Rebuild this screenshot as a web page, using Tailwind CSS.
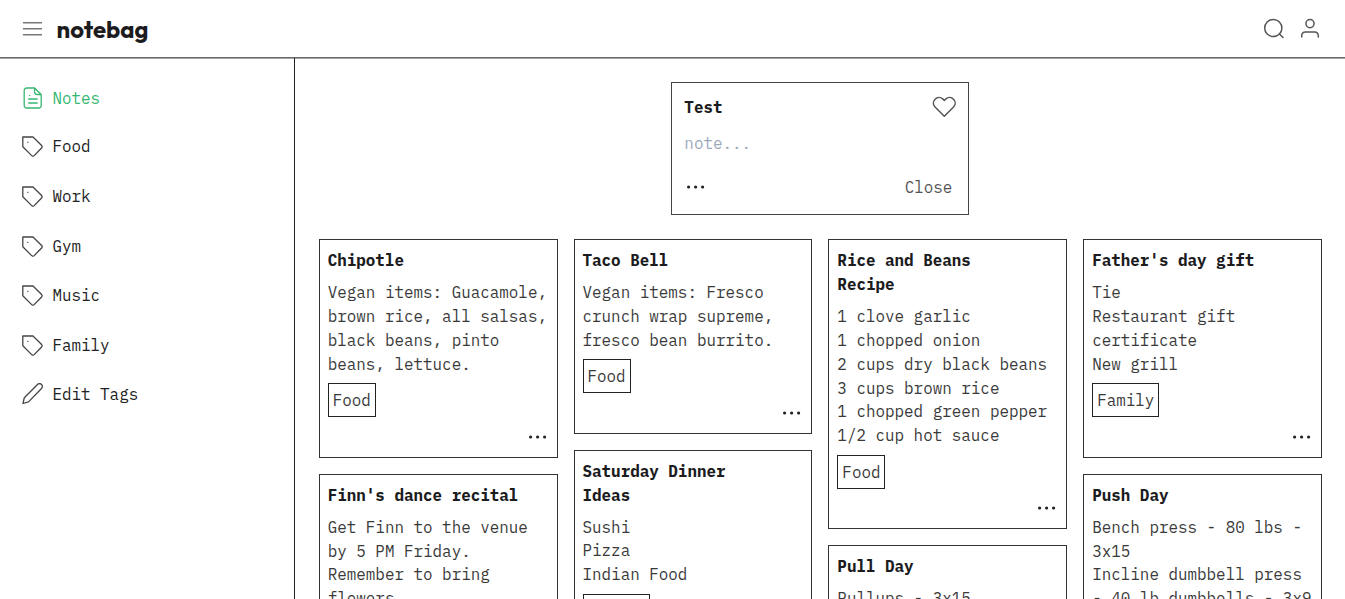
<!DOCTYPE html>
<html lang="en">
<head>
<meta charset="utf-8">
<title>notebag</title>
<script src="https://cdn.jsdelivr.net/npm/@tailwindcss/browser@4"></script>
</head>
<body class="h-[599px] overflow-hidden bg-white font-['IBM_Plex_Mono','Liberation_Mono',monospace] text-[15.9px] leading-[23.86px] text-[#3a3a3a]">
<svg class="hidden">
  <symbol id="tag" viewBox="0 0 22 22"><path d="M.8 1h10.200l8.600 8.500a1.800 1.800 0 0 1 0 2.500l-7.400 7.600a1.800 1.800 0 0 1-2.500 0L.8 10.800z" fill="none" stroke="#444" stroke-width="1.300" stroke-linejoin="round"/><path d="M5 6.300h1.500" stroke="currentColor" stroke-width="1.200" opacity=".6"/></symbol>
  <symbol id="dots" viewBox="0 0 20 6"><circle cx="2.600" cy="3" r="1.600"/><circle cx="9.600" cy="3" r="1.600"/><circle cx="16.600" cy="3" r="1.600"/></symbol>
</svg>
<div class="flex h-full flex-col">
  <header class="flex h-[58px] shrink-0 items-center border-b border-[#6a6a6a] pr-[25px] pl-[22px] shadow-[0_1px_0_#a5a5a5]">
    <svg class="h-[20px] w-[20px] text-[#777]" viewBox="0 0 20 20" fill="none" stroke="currentColor" stroke-width="1.500" stroke-linecap="round"><path d="M1.500 3.700h18M1.500 9.700h18M1.500 15.700h18"/></svg>
    <h1 class="ml-[14.500px] pt-[1px] font-['Outfit','Inter',sans-serif] text-[23.86px] leading-[30px] font-bold text-[#1c1c1e] [font-feature-settings:'cv11']">notebag</h1>
    <div class="ml-auto flex items-center gap-[16px] text-[#555]">
      <svg class="h-[22px] w-[21px]" viewBox="0 0 21 22" fill="none" stroke="currentColor" stroke-width="1.500" stroke-linecap="round"><circle cx="10.300" cy="10" r="8.600"/><path d="M16.500 16l3.500 3.500"/></svg>
      <svg class="h-[22px] w-[20px]" viewBox="0 0 20 22" fill="none" stroke="currentColor" stroke-width="1.500" stroke-linecap="round"><circle cx="10" cy="5.600" r="4.100"/><path d="M1.700 19v-1.500a3.500 3.500 0 0 1 3.500-3.500h9.600a3.500 3.500 0 0 1 3.500 3.500v1.500"/></svg>
    </div>
  </header>
  <div class="flex min-h-0 flex-1">
    <nav class="flex w-[295px] shrink-0 flex-col border-r border-[#222] pt-[28.800px] pl-[22px] text-[#222]">
      <a class="mb-[24.500px] flex h-[24px] items-center gap-[8.400px] text-[#37b772]"><svg class="-mt-[1px] h-[22px] w-[22px]" viewBox="0 0 22 22" fill="none" stroke="currentColor" stroke-width="1.300" stroke-linejoin="round" stroke-linecap="round"><path d="M12.600 1H4.700a2.500 2.500 0 0 0-2.500 2.500v15A2.500 2.500 0 0 0 4.700 21h12a2.500 2.500 0 0 0 2.500-2.500V7.500zM12.600 1v4a2.500 2.500 0 0 0 2.500 2.500h4M6.700 12h8.500M6.700 16h8.500M7.500 8.300h.3"/></svg>Notes</a>
      <a class="mb-[25.700px] flex h-[24px] items-center gap-[8.400px]"><svg class="h-[22px] w-[22px]"><use href="#tag"/></svg>Food</a>
      <a class="mb-[25.700px] flex h-[24px] items-center gap-[8.400px]"><svg class="h-[22px] w-[22px]"><use href="#tag"/></svg>Work</a>
      <a class="mb-[25.700px] flex h-[24px] items-center gap-[8.400px]"><svg class="h-[22px] w-[22px]"><use href="#tag"/></svg>Gym</a>
      <a class="mb-[25.700px] flex h-[24px] items-center gap-[8.400px]"><svg class="h-[22px] w-[22px]"><use href="#tag"/></svg>Music</a>
      <a class="mb-[24.500px] flex h-[24px] items-center gap-[8.400px]"><svg class="h-[22px] w-[22px]"><use href="#tag"/></svg>Family</a>
      <a class="flex h-[24px] items-center gap-[8.400px]"><svg class="-mt-[1px] h-[22px] w-[22px]" viewBox="0 0 22 22" fill="none" stroke="#444" stroke-width="1.300" stroke-linejoin="round"><path d="M1 20.500l1.300-5.800L15.500 1.500a2.700 2.700 0 0 1 4 0 2.700 2.700 0 0 1 0 4L6.500 18.900z"/></svg>Edit Tags</a>
    </nav>
    <main class="flex min-w-0 flex-1 flex-col pt-[24px] pr-[23px] pl-[23.700px]">
      <section class="mx-auto flex h-[133px] w-[298px] shrink-0 flex-col border border-[#444] px-[12px] pt-[13px]">
        <div class="flex h-[24px] items-center justify-between"><h2 class="font-bold text-[#1c1c1e]">Test</h2>
          <svg class="-mt-[2px] h-[22px] w-[24px] text-[#555]" viewBox="0 0 24 22" fill="none" stroke="currentColor" stroke-width="1.500" stroke-linejoin="round"><path d="M12.300 20.300L2.800 10.800A5.600 5.600 0 0 1 10.700 2.900L12.300 4.500l1.600-1.600a5.600 5.600 0 0 1 7.900 7.900z"/></svg></div>
        <p class="mt-[12px] text-[#9ca9bd]">note...</p>
        <div class="mt-[20px] flex items-center justify-between pr-[4px] pl-[2px]"><svg class="-mt-[2px] h-[6px] w-[20px] fill-[#222]"><use href="#dots"/></svg><span class="text-[#555]">Close</span></div>
      </section>
      <div class="mt-[24px] grid grid-cols-4 items-start gap-[16px]">
        <div class="flex flex-col gap-[16px]">
          <article class="flex h-[219px] flex-col border border-[#333] px-[8px] pt-[9.300px]">
            <h3 class="font-bold text-[#1c1c1e]">Chipotle</h3>
            <p class="mt-[8px] whitespace-nowrap">Vegan items: Guacamole,<br>brown rice, all salsas,<br>black beans, pinto<br>beans, lettuce.</p>
            <span class="mt-[6.700px] h-[34px] shrink-0 self-start border border-[#222] px-[4px] py-[5px]">Food</span>
            <svg class="mt-[17px] mr-[1px] h-[6px] w-[20px] shrink-0 self-end fill-[#222]"><use href="#dots"/></svg>
          </article>
          <article class="flex h-[219px] flex-col border border-[#333] px-[8px] pt-[9px]">
            <h3 class="font-bold text-[#1c1c1e]">Finn's dance recital</h3>
            <p class="mt-[7.800px] whitespace-nowrap">Get Finn to the venue<br>by 5 PM Friday.<br>Remember to bring<br>flowers.</p>
          </article>
        </div>
        <div class="flex flex-col gap-[16px]">
          <article class="flex h-[195px] flex-col border border-[#333] px-[8px] pt-[9.300px]">
            <h3 class="font-bold text-[#1c1c1e]">Taco Bell</h3>
            <p class="mt-[8px] whitespace-nowrap">Vegan items: Fresco<br>crunch wrap supreme,<br>fresco bean burrito.</p>
            <span class="mt-[6.700px] h-[34px] shrink-0 self-start border border-[#222] px-[4px] py-[5px]">Food</span>
            <svg class="mt-[17px] mr-[1px] h-[6px] w-[20px] shrink-0 self-end fill-[#222]"><use href="#dots"/></svg>
          </article>
          <article class="flex h-[219px] flex-col border border-[#333] px-[8px] pt-[9px]">
            <h3 class="font-bold text-[#1c1c1e]">Saturday Dinner<br>Ideas</h3>
            <p class="mt-[7.800px] whitespace-nowrap">Sushi<br>Pizza<br>Indian Food</p>
            <span class="mt-[7px] h-[34px] shrink-0 self-start border border-[#222] px-[4px] py-[5px]">Family</span>
          </article>
        </div>
        <div class="flex flex-col gap-[16px]">
          <article class="flex h-[290px] flex-col border border-[#333] px-[8px] pt-[9.300px]">
            <h3 class="font-bold text-[#1c1c1e]">Rice and Beans<br>Recipe</h3>
            <p class="mt-[8px] whitespace-nowrap">1 clove garlic<br>1 chopped onion<br>2 cups dry black beans<br>3 cups brown rice<br>1 chopped green pepper<br>1/2 cup hot sauce</p>
            <span class="mt-[6.700px] h-[34px] shrink-0 self-start border border-[#222] px-[4px] py-[5px]">Food</span>
            <svg class="mt-[16px] mr-[1px] h-[6px] w-[20px] shrink-0 self-end fill-[#222]"><use href="#dots"/></svg>
          </article>
          <article class="flex h-[219px] flex-col border border-[#333] px-[8px] pt-[9.300px]">
            <h3 class="font-bold text-[#1c1c1e]">Pull Day</h3>
            <p class="mt-[8px] whitespace-nowrap">Pullups - 3x15</p>
          </article>
        </div>
        <div class="flex flex-col gap-[16px]">
          <article class="flex h-[219px] flex-col border border-[#333] px-[8px] pt-[9.300px]">
            <h3 class="font-bold text-[#1c1c1e]">Father's day gift</h3>
            <p class="mt-[8px] whitespace-nowrap">Tie<br>Restaurant gift<br>certificate<br>New grill</p>
            <span class="mt-[6.700px] h-[34px] shrink-0 self-start border border-[#222] px-[4px] py-[5px]">Family</span>
            <svg class="mt-[17px] mr-[1px] h-[6px] w-[20px] shrink-0 self-end fill-[#222]"><use href="#dots"/></svg>
          </article>
          <article class="flex h-[219px] flex-col border border-[#333] px-[8px] pt-[9px]">
            <h3 class="font-bold text-[#1c1c1e]">Push Day</h3>
            <p class="mt-[7.800px] whitespace-nowrap">Bench press - 80 lbs -<br>3x15<br>Incline dumbbell press<br>- 40 lb dumbbells - 3x9</p>
          </article>
        </div>
      </div>
    </main>
  </div>
</div>
</body>
</html>
